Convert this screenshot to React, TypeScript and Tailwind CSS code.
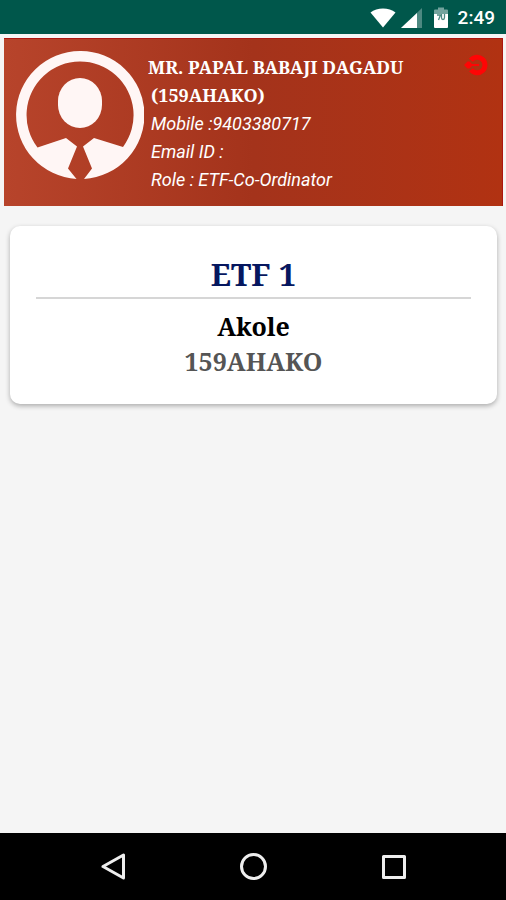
import React from "react";

const serif = "font-['Noto_Serif','Droid_Serif','DejaVu_Serif_Condensed','DejaVu_Serif',serif]";

function StatusBar() {
  return (
    <div className="flex h-[34px] items-center justify-end bg-[#00574b] pr-[11px] pt-[2px] text-white">
      <svg width="26" height="20" viewBox="0 0 26 20" className="mr-[5px]" aria-hidden="true">
        <path d="M0.500 4.500C7 -0.800 19 -0.800 25.500 4.500L13 19.500Z" fill="currentColor" />
      </svg>
      <svg width="22" height="20" viewBox="0 0 22 20" className="mr-[10px]" aria-hidden="true">
        <path d="M21 0V20H0Z" fill="#4d8981" />
        <path d="M16 5V20H0Z" fill="currentColor" />
      </svg>
      <svg width="16" height="22" viewBox="0 0 16 22" className="mr-[9px]" aria-hidden="true">
        <path d="M1 7V3.500Q1 2.500 2 2.500H5V0.500H11V2.500H14Q15 2.500 15 3.500V7Z" fill="#73a39d" />
        <path d="M1 7H15V20Q15 21 14 21H2Q1 21 1 20Z" fill="currentColor" />
        <path d="M4 8H7.500L5.500 13M8.500 7V10.500Q8.500 12.500 10 12.500T11.500 10.500V7" fill="none" stroke="#4d8981" strokeWidth="1.300" />
      </svg>
      <span className="text-[19px] leading-6 font-medium">2:49</span>
    </div>
  );
}

function Avatar() {
  return (
    <svg width="128" height="128" viewBox="0 0 128 128" className="shrink-0 text-[#fff6f5]" role="img" aria-label="Profile">
      <path
        fill="currentColor"
        d="M60.500 127.900A64 64 0 0 1 64 0A64 64 0 0 1 68 127.900L76 117.500L67 95.500L78 87L107 96A53.500 53.500 0 1 0 21.500 96.500L50 87L61 95.500L52 117.500Z"
      />
      <rect x="42" y="27" width="44" height="50" rx="22" ry="23" fill="currentColor" />
    </svg>
  );
}

function ProfileHeader() {
  return (
    <header className="mt-1 mr-[3px] ml-1 flex items-start border-t border-r border-[#ac1510] bg-linear-to-r from-[#b7442b] via-[#a4331b] via-50% to-[#b13212] pt-3 pb-3 pl-3 text-white">
      <Avatar />
      <div className="ml-1 min-w-0 flex-1 pt-[3px] text-lg leading-7">
        <h1 className={`${serif} font-bold -mt-px`}>
          MR. PAPAL BABAJI DAGADU
          <span className="block pl-[3px]">(159AHAKO)</span>
        </h1>
        <div className="pt-px pl-[3px] italic">
          <p>Mobile :9403380717</p>
          <p>Email ID :</p>
          <p>Role : ETF-Co-Ordinator</p>
        </div>
      </div>
      <button type="button" aria-label="Log out" className="mt-[3px] mr-[14px] text-[#ff0505]">
        <svg width="24" height="22" viewBox="0 0 24 22" aria-hidden="true">
          <path d="M7 6.200A7.800 7.800 0 1 1 7 15.800" fill="none" stroke="currentColor" strokeWidth="5" />
          <path d="M0 11L3.500 7.500H5.500L8 10H15V12H8L5.500 14.500H3.500Z" fill="currentColor" />
        </svg>
      </button>
    </header>
  );
}

function TeamCard() {
  return (
    <section className={`${serif} mr-[9px] ml-[10px] mt-5 rounded-[10px] bg-white px-[26px] pt-7 pb-[25px] text-center font-bold shadow-[0_2px_5px_rgba(0,0,0,0.3)]`}>
      <h2 className="border-b-2 border-[#d6d6d6] pb-[3px] text-[31px] leading-10 text-[#06175f]">ETF 1</h2>
      <p className="mt-[10px] text-[25px] leading-[35px] text-black">Akole</p>
      <p className="text-[25px] leading-[35px] text-[#555555]">159AHAKO</p>
    </section>
  );
}

function NavigationBar() {
  return (
    <nav className="mt-auto flex h-[67px] items-center justify-center gap-28 bg-black text-[#eeeeee]">
      <button type="button" aria-label="Back">
        <svg width="28" height="28" viewBox="0 0 28 28" fill="none" stroke="currentColor" strokeWidth="3" strokeLinejoin="round" aria-hidden="true">
          <path d="M24.500 2V25L4 13.500Z" />
        </svg>
      </button>
      <button type="button" aria-label="Home">
        <svg width="28" height="28" viewBox="0 0 28 28" fill="none" stroke="currentColor" strokeWidth="3" aria-hidden="true">
          <circle cx="14.500" cy="13.500" r="12" />
        </svg>
      </button>
      <button type="button" aria-label="Recent apps">
        <svg width="28" height="28" viewBox="0 0 28 28" fill="none" stroke="currentColor" strokeWidth="3" strokeLinejoin="round" aria-hidden="true">
          <path d="M4.500 3.500H25.500V24.500H4.500Z" />
        </svg>
      </button>
    </nav>
  );
}

export default function App() {
  return (
    <div className="flex min-h-screen flex-col bg-[#f5f5f5] font-[Roboto,sans-serif]">
      <StatusBar />
      <ProfileHeader />
      <main>
        <TeamCard />
      </main>
      <NavigationBar />
    </div>
  );
}
